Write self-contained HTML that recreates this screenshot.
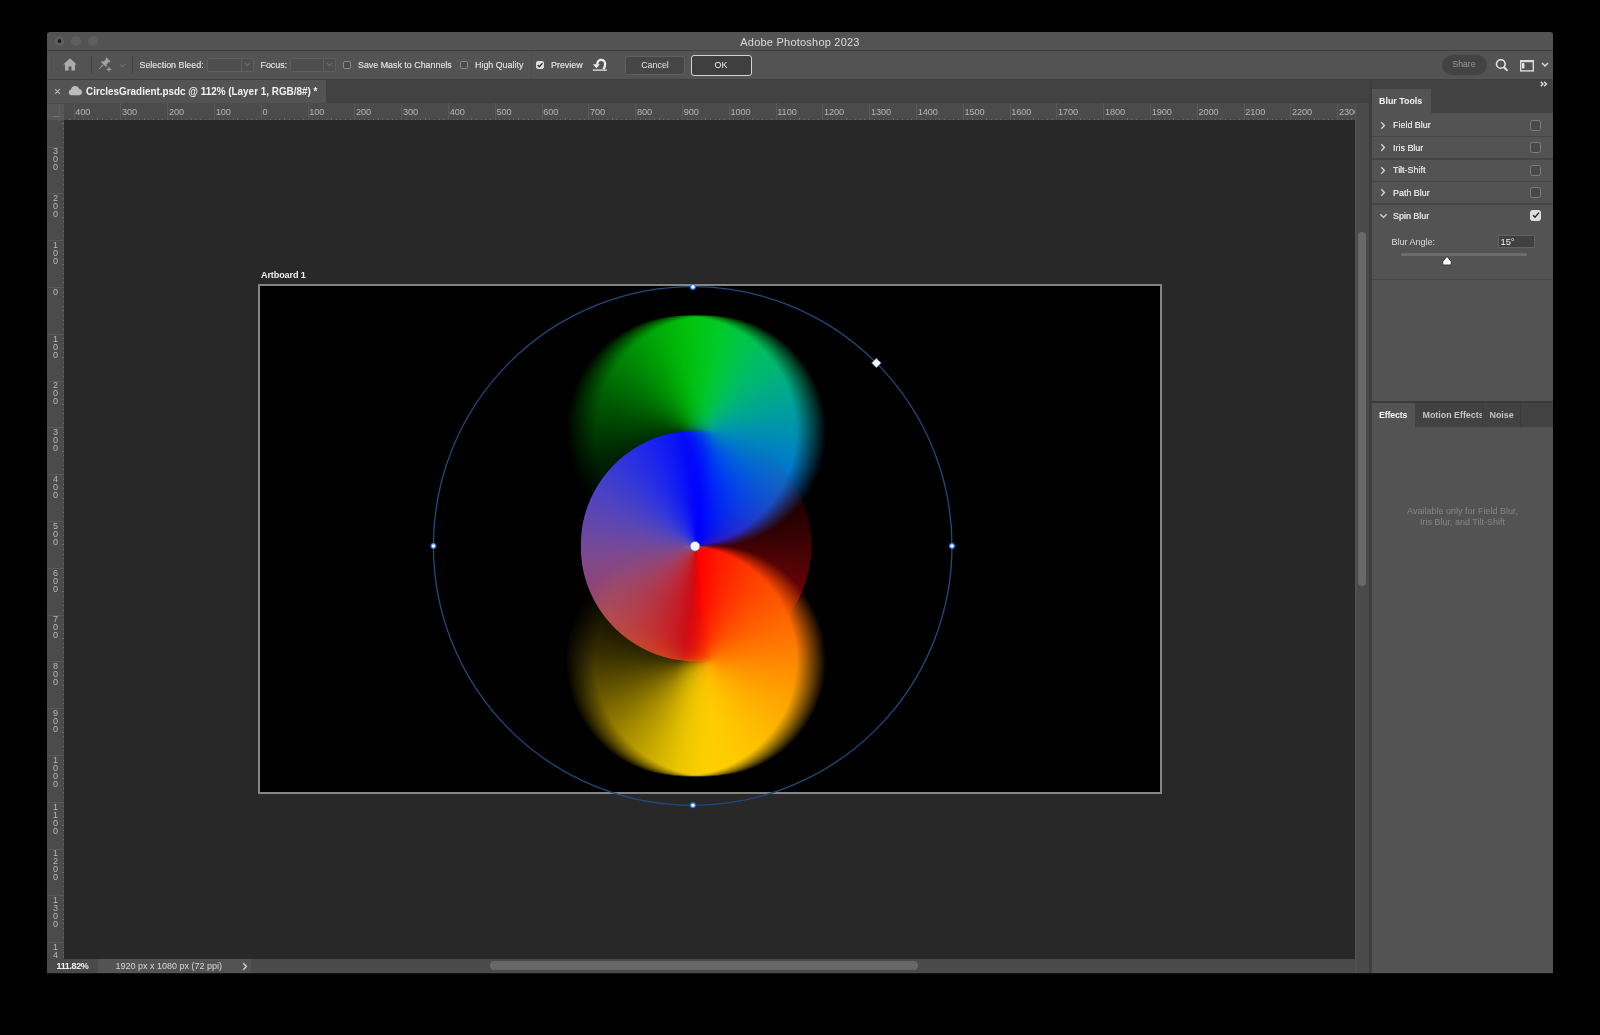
<!DOCTYPE html>
<html><head><meta charset="utf-8"><title>Adobe Photoshop 2023</title>
<style>
*{box-sizing:border-box;margin:0;padding:0}
html,body{width:1600px;height:1035px;background:#000;overflow:hidden}
body{font-family:"Liberation Sans",sans-serif;font-size:9px;color:#d6d6d6;position:relative}
#win{position:absolute;left:0;top:0;width:1600px;height:1035px;clip-path:inset(32px 47px 61.8px 47px round 3.5px 3.5px 0 0);background:#535353}
.abs,#win div,#win span,#win b,#win u,#win svg{position:absolute}
.t{white-space:nowrap;line-height:12px;height:12px}
.t,.btn,#hr,#vr{filter:grayscale(1)}
.o{text-shadow:0 0 0.35px #d6d6d6}
/* title bar */
#title{left:47px;top:32px;width:1506px;height:18px;background:#535353}
#title .t{left:0;width:1506px;text-align:center;top:4px;font-size:11px;color:#dcdcdc;letter-spacing:0.22px}
.tl{width:9.6px;height:9.6px;border-radius:50%;background:#5e5e5e;top:4.1px}
#l1{left:7.5px}#l2{left:24.3px}#l3{left:41.2px}
#l1:after{content:"";position:absolute;left:3.1px;top:3.1px;width:3.4px;height:3.4px;border-radius:50%;background:#161616}
.hline{height:1px;background:#3e3e3e;left:47px;width:1506px}
/* options bar */
#opt{left:47px;top:51px;width:1506px;height:28px;background:#535353}
.vsep{width:1px;background:#444;top:56px;height:18px}
.dd{top:57.5px;height:14px;border:1px solid #5f5f5f;border-radius:2px;background:#4e4e4e}
.dd:after{content:"";position:absolute;right:11px;top:0;width:1px;height:12px;background:#5f5f5f}
.cb{width:8px;height:8px;border:1px solid #8a8a8a;border-radius:2px;background:#4a4a4a;top:61px}
.cb.on{background:#dcdcdc;border-color:#dcdcdc}
.btn{border-radius:3px;text-align:center;color:#e6e6e6;font-size:8.9px}
/* tab bar */
#tabs{left:47px;top:80px;width:1322px;height:23px;background:#424242}
#tab1{left:47px;top:80px;width:279px;height:23px;background:#535353}
/* rulers */
#hr{left:47px;top:103px;width:1308px;height:17px;background:#4b4b4b;overflow:hidden}
#hr b{top:0;width:1px;height:17px;background:#595959;margin-left:-47px}
#hr span{top:4px;font-size:9.2px;line-height:10px;color:#b6b6b6;margin-left:-47px;letter-spacing:-0.1px}
#hr u{width:1px;background:#6e6e6e;margin-left:-47px}
#hr u.m1{top:15.5px;height:1.5px}#hr u.m5{top:14.5px;height:2.5px}
#vr{left:47px;top:120px;width:17px;height:838.8px;background:#4b4b4b;overflow:hidden}
#vr b{left:0;height:1px;width:17px;background:#595959;margin-top:-120px}
#vr span{left:0;width:17px;text-align:center;font-size:9px;line-height:8px;height:8px;color:#b9b9b9;margin-top:-120px}
#vr u{height:1px;background:#6e6e6e;margin-top:-120px}
#vr u.m1{left:15.5px;width:1.5px}#vr u.m5{left:14.5px;width:2.5px}
#corner{left:47px;top:103.5px;width:17px;height:16.5px;background:#565656}
/* canvas */
#canvas{left:64px;top:120px;width:1291px;height:838.8px;background:#282828;overflow:hidden}
#ab{left:258px;top:284px;width:904px;height:510px;border:2px solid #858585;background:#000}
/* scrollbars / status */
#vs{left:1355px;top:103px;width:14px;height:870px;background:linear-gradient(90deg,#505050 0,#505050 1.8px,#4a4a4a 2.2px)}
#status{left:47px;top:958.8px;width:1308px;height:14.5px;background:#4a4a4a}
/* panel */
#psep{left:1369px;top:80px;width:3.2px;height:893px;background:#3e3e3e}
#panel{left:1372px;top:80px;width:181px;height:893px;background:#535353}
.prow{left:1372px;width:181px;height:22px}
.pline{left:1372px;width:181px;height:1.5px;background:#454545;margin-top:-0.25px}
.pcb{left:1530px;width:11px;height:11px;border:1px solid #7e7e7e;border-radius:2.5px;background:#494949}
.pcb.on{background:#dedede;border-color:#dedede}
.ptxt{left:1393px;font-size:8.95px;color:#e2e2e2;text-shadow:0 0 0.35px #e2e2e2}

#art{position:absolute;left:455.8px;top:305.8px;width:480px;height:480px;}
#art .n{position:absolute;left:0;top:0;width:480px;height:480px}
#art .g{position:absolute;left:0;top:0;width:480px;height:480px;border-radius:50%;background:#000;overflow:hidden;isolation:isolate;transform-origin:50% 50%;}
#art i{position:absolute;display:block;width:231.0px;height:231.0px;clip-path:circle(50%);left:124.5px;}
#art .ct{top:9.0px;background:conic-gradient(from 180deg, rgba(0,208,10,0.000) 0.00deg, rgba(0,208,10,0.007) 18.00deg, rgba(0,208,10,0.032) 36.00deg, rgba(0,208,10,0.085) 54.00deg, rgba(0,208,10,0.180) 72.00deg, rgba(0,208,10,0.315) 90.00deg, rgba(0,208,10,0.425) 104.94deg, rgba(0,208,10,0.540) 120.06deg, rgba(0,208,10,0.655) 135.00deg, rgba(0,208,10,0.775) 149.94deg, rgba(0,208,10,0.885) 165.06deg, rgba(0,208,10,1.000) 180.00deg, rgba(0,204,52,1.000) 195.00deg, rgba(0,197,83,1.000) 210.00deg, rgba(0,187,111,1.000) 225.00deg, rgba(0,176,135,1.000) 240.00deg, rgba(0,162,158,1.000) 255.00deg, rgba(0,147,179,1.000) 270.00deg, rgba(0,130,197,1.000) 285.00deg, rgba(0,111,214,1.000) 300.00deg, rgba(0,90,229,1.000) 315.00deg, rgba(0,67,241,1.000) 330.00deg, rgba(0,40,250,1.000) 345.00deg, rgba(0,0,255,1.000) 360.00deg);}
#art .cm{top:124.5px;background:conic-gradient(from 0deg, rgba(206,8,16,0.000) 0.00deg, rgba(206,8,16,0.008) 18.00deg, rgba(206,8,16,0.037) 36.00deg, rgba(206,8,16,0.095) 54.00deg, rgba(206,8,16,0.195) 72.00deg, rgba(206,8,16,0.330) 90.00deg, rgba(206,8,16,0.440) 104.94deg, rgba(206,8,16,0.550) 120.06deg, rgba(206,8,16,0.665) 135.00deg, rgba(206,8,16,0.780) 149.94deg, rgba(206,8,16,0.890) 165.06deg, rgba(206,8,16,1.000) 180.00deg, rgba(199,29,39,1.000) 195.00deg, rgba(188,45,62,1.000) 210.00deg, rgba(174,58,85,1.000) 225.00deg, rgba(157,67,108,1.000) 240.00deg, rgba(138,72,132,1.000) 255.00deg, rgba(118,74,155,1.000) 270.00deg, rgba(97,72,178,1.000) 285.00deg, rgba(76,67,199,1.000) 300.00deg, rgba(55,57,218,1.000) 315.00deg, rgba(36,44,235,1.000) 330.00deg, rgba(17,26,247,1.000) 345.00deg, rgba(0,0,255,1.000) 360.00deg);}
#art .cb{top:240.0px;background:conic-gradient(from 0deg, rgba(255,0,0,1.000) 0.00deg, rgba(255,32,0,1.000) 15.00deg, rgba(255,57,0,1.000) 30.00deg, rgba(255,79,0,1.000) 45.00deg, rgba(255,99,0,1.000) 60.00deg, rgba(255,119,0,1.000) 75.00deg, rgba(255,139,0,1.000) 90.00deg, rgba(255,157,0,1.000) 105.00deg, rgba(255,173,0,1.000) 120.00deg, rgba(255,188,0,1.000) 135.00deg, rgba(255,200,0,1.000) 150.00deg, rgba(255,209,0,1.000) 165.00deg, rgba(255,215,0,1.000) 180.00deg, rgba(255,215,0,0.880) 194.94deg, rgba(255,215,0,0.770) 210.06deg, rgba(255,215,0,0.640) 225.00deg, rgba(255,215,0,0.510) 239.94deg, rgba(255,215,0,0.380) 255.06deg, rgba(255,215,0,0.255) 270.00deg, rgba(255,215,0,0.140) 288.00deg, rgba(255,215,0,0.065) 306.00deg, rgba(255,215,0,0.024) 324.00deg, rgba(255,215,0,0.005) 342.00deg, rgba(255,215,0,0.000) 360.00deg);}

#art{filter:blur(0.45px)}
</style></head><body>
<div id="win">
  <!-- title bar -->
  <div id="title"><div class="tl" id="l1"></div><div class="tl" id="l2"></div><div class="tl" id="l3"></div>
    <div class="t">Adobe Photoshop 2023</div></div>
  <div class="hline" style="top:50px"></div>
  <!-- options bar -->
  <div id="opt"></div>
  <svg style="left:50px;top:57px" width="4" height="17" viewBox="0 0 4 17"><g fill="#444"><rect x="1" y="0" width="1" height="1"/><rect x="1" y="2" width="1" height="1"/><rect x="1" y="4" width="1" height="1"/><rect x="1" y="6" width="1" height="1"/><rect x="1" y="8" width="1" height="1"/><rect x="1" y="10" width="1" height="1"/><rect x="1" y="12" width="1" height="1"/><rect x="1" y="14" width="1" height="1"/></g></svg>
  <svg style="left:63px;top:58px" width="14" height="13" viewBox="0 0 14 13"><path d="M7 0.3 L0.2 6.4 H2 V12.6 H5.6 V8.4 H8.4 V12.6 H12 V6.4 H13.8 Z" fill="#ababab"/></svg>
  <div class="vsep" style="left:91px"></div>
  <svg style="left:97.8px;top:55.8px" width="16" height="16" viewBox="0 0 16 16"><g fill="#a2a2a2"><path d="M8.2 1.2 L12.6 5.6 L11.6 6.3 L10.9 5.9 L8.6 8.3 L8.8 10.3 L7.9 11 L3.0 6.1 L3.8 5.3 L5.8 5.5 L8.1 3.1 L7.6 2.2 Z"/><path d="M5.0 8.6 L5.6 9.2 L1.2 13.2 L0.8 12.8 Z"/><path d="M10.4 11.2 H11.6 V12.8 H13.2 V14 H11.6 V15.6 H10.4 V14 H8.8 V12.8 H10.4 Z"/></g></svg>
  <svg style="left:119px;top:63px" width="7" height="5" viewBox="0 0 7 5"><path d="M0.7 0.8 L3.5 3.6 L6.3 0.8" fill="none" stroke="#6c6c6c" stroke-width="1.1"/></svg>
  <div class="vsep" style="left:132px"></div>
  <div class="t o" style="left:139.5px;top:59px;color:#d6d6d6;font-size:8.9px">Selection Bleed:</div>
  <div class="dd" style="left:207px;width:47px"></div>
  <svg style="left:244px;top:62px" width="7" height="5" viewBox="0 0 7 5"><path d="M0.7 0.8 L3.5 3.6 L6.3 0.8" fill="none" stroke="#6c6c6c" stroke-width="1.1"/></svg>
  <div class="t o" style="left:260.5px;top:59px;color:#d6d6d6;font-size:8.9px">Focus:</div>
  <div class="dd" style="left:289.5px;width:46px"></div>
  <svg style="left:326px;top:62px" width="7" height="5" viewBox="0 0 7 5"><path d="M0.7 0.8 L3.5 3.6 L6.3 0.8" fill="none" stroke="#6c6c6c" stroke-width="1.1"/></svg>
  <div class="cb" style="left:343px"></div>
  <div class="t o" style="left:358px;top:59px;font-size:8.9px">Save Mask to Channels</div>
  <div class="cb" style="left:460px"></div>
  <div class="t o" style="left:475px;top:59px;font-size:8.9px">High Quality</div>
  <div class="vsep" style="left:531px;top:51px;height:28px;background:#4d4d4d"></div>
  <div class="cb on" style="left:536px"></div>
  <svg style="left:536px;top:61px" width="8" height="8" viewBox="0 0 8 8"><path d="M1.6 4.1 L3.3 5.8 L6.5 2.1" fill="none" stroke="#2a2a2a" stroke-width="1.3"/></svg>
  <div class="t o" style="left:551px;top:59px;font-size:8.9px">Preview</div>
  <svg style="left:592px;top:58px" width="16" height="14" viewBox="0 0 16 14"><path d="M11.4 11.2 Q13.4 8.8 13.1 5.7 A3.9 3.9 0 0 0 5.3 5.7 V6.5" fill="none" stroke="#ececec" stroke-width="2.3"/><path d="M0.9 6.3 H7.9 L4.4 10.3 Z" fill="#ececec"/><rect x="0.9" y="11.3" width="14" height="1.7" fill="#c2c2c2"/></svg>
  <div class="btn" style="left:625px;top:55.5px;width:60px;height:19px;background:#464646;border:1px solid #5f5f5f;line-height:17px">Cancel</div>
  <div class="btn" style="left:690.5px;top:54.5px;width:61px;height:21px;background:#3f3f3f;border:1.5px solid #d2d2d2;line-height:18px;color:#f0f0f0">OK</div>
  <div class="btn" style="left:1441.5px;top:55px;width:45px;height:19.5px;border-radius:10px;background:#434343;color:#828282;line-height:19px;font-size:8.6px;text-shadow:0 0 0.4px #828282">Share</div>
  <svg style="left:1494px;top:57px" width="16" height="16" viewBox="0 0 16 16"><circle cx="6.8" cy="7" r="4.3" fill="none" stroke="#e4e4e4" stroke-width="1.6"/><path d="M10 10.2 L12.9 13.1" stroke="#e4e4e4" stroke-width="2" stroke-linecap="round"/></svg>
  <svg style="left:1520px;top:59.5px" width="14" height="12" viewBox="0 0 14 12"><rect x="0.7" y="0.7" width="12.6" height="10.2" fill="none" stroke="#dcdcdc" stroke-width="1.4"/><rect x="0.7" y="0.7" width="12.6" height="1.5" fill="#dcdcdc"/><rect x="2.0" y="3.1" width="2.4" height="5.2" fill="#e8e8e8"/></svg>
  <svg style="left:1541px;top:62.2px" width="8" height="6" viewBox="0 0 8 6"><path d="M1 1 L4 4 L7 1" fill="none" stroke="#dadada" stroke-width="1.5"/></svg>
  <div class="hline" style="top:79px"></div>
  <!-- tab bar -->
  <div id="tabs"></div>
  <div id="tab1"></div>
  <svg style="left:53.5px;top:87.5px" width="7" height="7" viewBox="0 0 7 7"><path d="M1.1 1.1 L5.9 5.9 M5.9 1.1 L1.1 5.9" stroke="#b4b4b4" stroke-width="1.1" fill="none"/></svg>
  <svg style="left:67.7px;top:85.2px" width="15" height="11" viewBox="0 0 15 11"><path d="M3.2 10.3 A2.9 2.9 0 0 1 3.0 4.6 A4.4 4.4 0 0 1 11.4 3.9 A3.3 3.3 0 0 1 11.7 10.3 Z" fill="#bcbcbc"/></svg>
  <div class="t" style="left:86px;top:84.7px;font-size:11px;font-weight:bold;color:#f2f2f2;transform:scaleX(0.9);transform-origin:0 0">CirclesGradient.psdc @ 112% (Layer 1, RGB/8#) *</div>
  <div class="hline" style="top:102.7px;width:1323px;background:#444"></div>
  <!-- rulers -->
  <div id="hr"><b style="left:73.5px"></b><span style="left:75.3px">400</span><b style="left:120.3px"></b><span style="left:122.1px">300</span><b style="left:167.1px"></b><span style="left:168.9px">200</span><b style="left:213.9px"></b><span style="left:215.7px">100</span><b style="left:260.7px"></b><span style="left:262.5px">0</span><b style="left:307.5px"></b><span style="left:309.3px">100</span><b style="left:354.3px"></b><span style="left:356.1px">200</span><b style="left:401.1px"></b><span style="left:402.9px">300</span><b style="left:447.9px"></b><span style="left:449.7px">400</span><b style="left:494.7px"></b><span style="left:496.5px">500</span><b style="left:541.5px"></b><span style="left:543.3px">600</span><b style="left:588.3px"></b><span style="left:590.1px">700</span><b style="left:635.1px"></b><span style="left:636.9px">800</span><b style="left:681.9px"></b><span style="left:683.7px">900</span><b style="left:728.7px"></b><span style="left:730.5px">1000</span><b style="left:775.5px"></b><span style="left:777.3px">1100</span><b style="left:822.3px"></b><span style="left:824.1px">1200</span><b style="left:869.1px"></b><span style="left:870.9px">1300</span><b style="left:915.9px"></b><span style="left:917.7px">1400</span><b style="left:962.7px"></b><span style="left:964.5px">1500</span><b style="left:1009.5px"></b><span style="left:1011.3px">1600</span><b style="left:1056.3px"></b><span style="left:1058.1px">1700</span><b style="left:1103.1px"></b><span style="left:1104.9px">1800</span><b style="left:1149.9px"></b><span style="left:1151.7px">1900</span><b style="left:1196.7px"></b><span style="left:1198.5px">2000</span><b style="left:1243.5px"></b><span style="left:1245.3px">2100</span><b style="left:1290.3px"></b><span style="left:1292.1px">2200</span><b style="left:1337.1px"></b><span style="left:1338.9px">2300</span><u class="m1" style="left:68.8px"></u><u class="m1" style="left:78.2px"></u><u class="m1" style="left:82.9px"></u><u class="m1" style="left:87.5px"></u><u class="m1" style="left:92.2px"></u><u class="m5" style="left:96.9px"></u><u class="m1" style="left:101.6px"></u><u class="m1" style="left:106.3px"></u><u class="m1" style="left:110.9px"></u><u class="m1" style="left:115.6px"></u><u class="m1" style="left:125.0px"></u><u class="m1" style="left:129.7px"></u><u class="m1" style="left:134.3px"></u><u class="m1" style="left:139.0px"></u><u class="m5" style="left:143.7px"></u><u class="m1" style="left:148.4px"></u><u class="m1" style="left:153.1px"></u><u class="m1" style="left:157.7px"></u><u class="m1" style="left:162.4px"></u><u class="m1" style="left:171.8px"></u><u class="m1" style="left:176.5px"></u><u class="m1" style="left:181.1px"></u><u class="m1" style="left:185.8px"></u><u class="m5" style="left:190.5px"></u><u class="m1" style="left:195.2px"></u><u class="m1" style="left:199.9px"></u><u class="m1" style="left:204.5px"></u><u class="m1" style="left:209.2px"></u><u class="m1" style="left:218.6px"></u><u class="m1" style="left:223.3px"></u><u class="m1" style="left:227.9px"></u><u class="m1" style="left:232.6px"></u><u class="m5" style="left:237.3px"></u><u class="m1" style="left:242.0px"></u><u class="m1" style="left:246.7px"></u><u class="m1" style="left:251.3px"></u><u class="m1" style="left:256.0px"></u><u class="m1" style="left:265.4px"></u><u class="m1" style="left:270.1px"></u><u class="m1" style="left:274.7px"></u><u class="m1" style="left:279.4px"></u><u class="m5" style="left:284.1px"></u><u class="m1" style="left:288.8px"></u><u class="m1" style="left:293.5px"></u><u class="m1" style="left:298.1px"></u><u class="m1" style="left:302.8px"></u><u class="m1" style="left:312.2px"></u><u class="m1" style="left:316.9px"></u><u class="m1" style="left:321.5px"></u><u class="m1" style="left:326.2px"></u><u class="m5" style="left:330.9px"></u><u class="m1" style="left:335.6px"></u><u class="m1" style="left:340.3px"></u><u class="m1" style="left:344.9px"></u><u class="m1" style="left:349.6px"></u><u class="m1" style="left:359.0px"></u><u class="m1" style="left:363.7px"></u><u class="m1" style="left:368.3px"></u><u class="m1" style="left:373.0px"></u><u class="m5" style="left:377.7px"></u><u class="m1" style="left:382.4px"></u><u class="m1" style="left:387.1px"></u><u class="m1" style="left:391.7px"></u><u class="m1" style="left:396.4px"></u><u class="m1" style="left:405.8px"></u><u class="m1" style="left:410.5px"></u><u class="m1" style="left:415.1px"></u><u class="m1" style="left:419.8px"></u><u class="m5" style="left:424.5px"></u><u class="m1" style="left:429.2px"></u><u class="m1" style="left:433.9px"></u><u class="m1" style="left:438.5px"></u><u class="m1" style="left:443.2px"></u><u class="m1" style="left:452.6px"></u><u class="m1" style="left:457.3px"></u><u class="m1" style="left:461.9px"></u><u class="m1" style="left:466.6px"></u><u class="m5" style="left:471.3px"></u><u class="m1" style="left:476.0px"></u><u class="m1" style="left:480.7px"></u><u class="m1" style="left:485.3px"></u><u class="m1" style="left:490.0px"></u><u class="m1" style="left:499.4px"></u><u class="m1" style="left:504.1px"></u><u class="m1" style="left:508.7px"></u><u class="m1" style="left:513.4px"></u><u class="m5" style="left:518.1px"></u><u class="m1" style="left:522.8px"></u><u class="m1" style="left:527.5px"></u><u class="m1" style="left:532.1px"></u><u class="m1" style="left:536.8px"></u><u class="m1" style="left:546.2px"></u><u class="m1" style="left:550.9px"></u><u class="m1" style="left:555.5px"></u><u class="m1" style="left:560.2px"></u><u class="m5" style="left:564.9px"></u><u class="m1" style="left:569.6px"></u><u class="m1" style="left:574.3px"></u><u class="m1" style="left:578.9px"></u><u class="m1" style="left:583.6px"></u><u class="m1" style="left:593.0px"></u><u class="m1" style="left:597.7px"></u><u class="m1" style="left:602.3px"></u><u class="m1" style="left:607.0px"></u><u class="m5" style="left:611.7px"></u><u class="m1" style="left:616.4px"></u><u class="m1" style="left:621.1px"></u><u class="m1" style="left:625.7px"></u><u class="m1" style="left:630.4px"></u><u class="m1" style="left:639.8px"></u><u class="m1" style="left:644.5px"></u><u class="m1" style="left:649.1px"></u><u class="m1" style="left:653.8px"></u><u class="m5" style="left:658.5px"></u><u class="m1" style="left:663.2px"></u><u class="m1" style="left:667.9px"></u><u class="m1" style="left:672.5px"></u><u class="m1" style="left:677.2px"></u><u class="m1" style="left:686.6px"></u><u class="m1" style="left:691.3px"></u><u class="m1" style="left:695.9px"></u><u class="m1" style="left:700.6px"></u><u class="m5" style="left:705.3px"></u><u class="m1" style="left:710.0px"></u><u class="m1" style="left:714.7px"></u><u class="m1" style="left:719.3px"></u><u class="m1" style="left:724.0px"></u><u class="m1" style="left:733.4px"></u><u class="m1" style="left:738.1px"></u><u class="m1" style="left:742.7px"></u><u class="m1" style="left:747.4px"></u><u class="m5" style="left:752.1px"></u><u class="m1" style="left:756.8px"></u><u class="m1" style="left:761.5px"></u><u class="m1" style="left:766.1px"></u><u class="m1" style="left:770.8px"></u><u class="m1" style="left:780.2px"></u><u class="m1" style="left:784.9px"></u><u class="m1" style="left:789.5px"></u><u class="m1" style="left:794.2px"></u><u class="m5" style="left:798.9px"></u><u class="m1" style="left:803.6px"></u><u class="m1" style="left:808.3px"></u><u class="m1" style="left:812.9px"></u><u class="m1" style="left:817.6px"></u><u class="m1" style="left:827.0px"></u><u class="m1" style="left:831.7px"></u><u class="m1" style="left:836.3px"></u><u class="m1" style="left:841.0px"></u><u class="m5" style="left:845.7px"></u><u class="m1" style="left:850.4px"></u><u class="m1" style="left:855.1px"></u><u class="m1" style="left:859.7px"></u><u class="m1" style="left:864.4px"></u><u class="m1" style="left:873.8px"></u><u class="m1" style="left:878.5px"></u><u class="m1" style="left:883.1px"></u><u class="m1" style="left:887.8px"></u><u class="m5" style="left:892.5px"></u><u class="m1" style="left:897.2px"></u><u class="m1" style="left:901.9px"></u><u class="m1" style="left:906.5px"></u><u class="m1" style="left:911.2px"></u><u class="m1" style="left:920.6px"></u><u class="m1" style="left:925.3px"></u><u class="m1" style="left:929.9px"></u><u class="m1" style="left:934.6px"></u><u class="m5" style="left:939.3px"></u><u class="m1" style="left:944.0px"></u><u class="m1" style="left:948.7px"></u><u class="m1" style="left:953.3px"></u><u class="m1" style="left:958.0px"></u><u class="m1" style="left:967.4px"></u><u class="m1" style="left:972.1px"></u><u class="m1" style="left:976.7px"></u><u class="m1" style="left:981.4px"></u><u class="m5" style="left:986.1px"></u><u class="m1" style="left:990.8px"></u><u class="m1" style="left:995.5px"></u><u class="m1" style="left:1000.1px"></u><u class="m1" style="left:1004.8px"></u><u class="m1" style="left:1014.2px"></u><u class="m1" style="left:1018.9px"></u><u class="m1" style="left:1023.5px"></u><u class="m1" style="left:1028.2px"></u><u class="m5" style="left:1032.9px"></u><u class="m1" style="left:1037.6px"></u><u class="m1" style="left:1042.3px"></u><u class="m1" style="left:1046.9px"></u><u class="m1" style="left:1051.6px"></u><u class="m1" style="left:1061.0px"></u><u class="m1" style="left:1065.7px"></u><u class="m1" style="left:1070.3px"></u><u class="m1" style="left:1075.0px"></u><u class="m5" style="left:1079.7px"></u><u class="m1" style="left:1084.4px"></u><u class="m1" style="left:1089.1px"></u><u class="m1" style="left:1093.7px"></u><u class="m1" style="left:1098.4px"></u><u class="m1" style="left:1107.8px"></u><u class="m1" style="left:1112.5px"></u><u class="m1" style="left:1117.1px"></u><u class="m1" style="left:1121.8px"></u><u class="m5" style="left:1126.5px"></u><u class="m1" style="left:1131.2px"></u><u class="m1" style="left:1135.9px"></u><u class="m1" style="left:1140.5px"></u><u class="m1" style="left:1145.2px"></u><u class="m1" style="left:1154.6px"></u><u class="m1" style="left:1159.3px"></u><u class="m1" style="left:1163.9px"></u><u class="m1" style="left:1168.6px"></u><u class="m5" style="left:1173.3px"></u><u class="m1" style="left:1178.0px"></u><u class="m1" style="left:1182.7px"></u><u class="m1" style="left:1187.3px"></u><u class="m1" style="left:1192.0px"></u><u class="m1" style="left:1201.4px"></u><u class="m1" style="left:1206.1px"></u><u class="m1" style="left:1210.7px"></u><u class="m1" style="left:1215.4px"></u><u class="m5" style="left:1220.1px"></u><u class="m1" style="left:1224.8px"></u><u class="m1" style="left:1229.5px"></u><u class="m1" style="left:1234.1px"></u><u class="m1" style="left:1238.8px"></u><u class="m1" style="left:1248.2px"></u><u class="m1" style="left:1252.9px"></u><u class="m1" style="left:1257.5px"></u><u class="m1" style="left:1262.2px"></u><u class="m5" style="left:1266.9px"></u><u class="m1" style="left:1271.6px"></u><u class="m1" style="left:1276.3px"></u><u class="m1" style="left:1280.9px"></u><u class="m1" style="left:1285.6px"></u><u class="m1" style="left:1295.0px"></u><u class="m1" style="left:1299.7px"></u><u class="m1" style="left:1304.3px"></u><u class="m1" style="left:1309.0px"></u><u class="m5" style="left:1313.7px"></u><u class="m1" style="left:1318.4px"></u><u class="m1" style="left:1323.1px"></u><u class="m1" style="left:1327.7px"></u><u class="m1" style="left:1332.4px"></u><u class="m1" style="left:1341.8px"></u><u class="m1" style="left:1346.5px"></u><u class="m1" style="left:1351.1px"></u></div>
  <div id="vr"><b style="top:146.5px"></b><span style="top:147.3px">3</span><span style="top:155.3px">0</span><span style="top:163.3px">0</span><b style="top:193.3px"></b><span style="top:194.1px">2</span><span style="top:202.1px">0</span><span style="top:210.1px">0</span><b style="top:240.1px"></b><span style="top:240.9px">1</span><span style="top:248.9px">0</span><span style="top:256.9px">0</span><b style="top:286.9px"></b><span style="top:287.7px">0</span><b style="top:333.7px"></b><span style="top:334.5px">1</span><span style="top:342.5px">0</span><span style="top:350.5px">0</span><b style="top:380.5px"></b><span style="top:381.3px">2</span><span style="top:389.3px">0</span><span style="top:397.3px">0</span><b style="top:427.3px"></b><span style="top:428.1px">3</span><span style="top:436.1px">0</span><span style="top:444.1px">0</span><b style="top:474.1px"></b><span style="top:474.9px">4</span><span style="top:482.9px">0</span><span style="top:490.9px">0</span><b style="top:520.9px"></b><span style="top:521.7px">5</span><span style="top:529.7px">0</span><span style="top:537.7px">0</span><b style="top:567.7px"></b><span style="top:568.5px">6</span><span style="top:576.5px">0</span><span style="top:584.5px">0</span><b style="top:614.5px"></b><span style="top:615.3px">7</span><span style="top:623.3px">0</span><span style="top:631.3px">0</span><b style="top:661.3px"></b><span style="top:662.1px">8</span><span style="top:670.1px">0</span><span style="top:678.1px">0</span><b style="top:708.1px"></b><span style="top:708.9px">9</span><span style="top:716.9px">0</span><span style="top:724.9px">0</span><b style="top:754.9px"></b><span style="top:755.7px">1</span><span style="top:763.7px">0</span><span style="top:771.7px">0</span><span style="top:779.7px">0</span><b style="top:801.7px"></b><span style="top:802.5px">1</span><span style="top:810.5px">1</span><span style="top:818.5px">0</span><span style="top:826.5px">0</span><b style="top:848.5px"></b><span style="top:849.3px">1</span><span style="top:857.3px">2</span><span style="top:865.3px">0</span><span style="top:873.3px">0</span><b style="top:895.3px"></b><span style="top:896.1px">1</span><span style="top:904.1px">3</span><span style="top:912.1px">0</span><span style="top:920.1px">0</span><b style="top:942.1px"></b><span style="top:942.9px">1</span><span style="top:950.9px">4</span><span style="top:958.9px">0</span><span style="top:966.9px">0</span><u class="m5" style="top:123.1px"></u><u class="m1" style="top:127.8px"></u><u class="m1" style="top:132.5px"></u><u class="m1" style="top:137.1px"></u><u class="m1" style="top:141.8px"></u><u class="m1" style="top:151.2px"></u><u class="m1" style="top:155.9px"></u><u class="m1" style="top:160.5px"></u><u class="m1" style="top:165.2px"></u><u class="m5" style="top:169.9px"></u><u class="m1" style="top:174.6px"></u><u class="m1" style="top:179.3px"></u><u class="m1" style="top:183.9px"></u><u class="m1" style="top:188.6px"></u><u class="m1" style="top:198.0px"></u><u class="m1" style="top:202.7px"></u><u class="m1" style="top:207.3px"></u><u class="m1" style="top:212.0px"></u><u class="m5" style="top:216.7px"></u><u class="m1" style="top:221.4px"></u><u class="m1" style="top:226.1px"></u><u class="m1" style="top:230.7px"></u><u class="m1" style="top:235.4px"></u><u class="m1" style="top:244.8px"></u><u class="m1" style="top:249.5px"></u><u class="m1" style="top:254.1px"></u><u class="m1" style="top:258.8px"></u><u class="m5" style="top:263.5px"></u><u class="m1" style="top:268.2px"></u><u class="m1" style="top:272.9px"></u><u class="m1" style="top:277.5px"></u><u class="m1" style="top:282.2px"></u><u class="m1" style="top:291.6px"></u><u class="m1" style="top:296.3px"></u><u class="m1" style="top:300.9px"></u><u class="m1" style="top:305.6px"></u><u class="m5" style="top:310.3px"></u><u class="m1" style="top:315.0px"></u><u class="m1" style="top:319.7px"></u><u class="m1" style="top:324.3px"></u><u class="m1" style="top:329.0px"></u><u class="m1" style="top:338.4px"></u><u class="m1" style="top:343.1px"></u><u class="m1" style="top:347.7px"></u><u class="m1" style="top:352.4px"></u><u class="m5" style="top:357.1px"></u><u class="m1" style="top:361.8px"></u><u class="m1" style="top:366.5px"></u><u class="m1" style="top:371.1px"></u><u class="m1" style="top:375.8px"></u><u class="m1" style="top:385.2px"></u><u class="m1" style="top:389.9px"></u><u class="m1" style="top:394.5px"></u><u class="m1" style="top:399.2px"></u><u class="m5" style="top:403.9px"></u><u class="m1" style="top:408.6px"></u><u class="m1" style="top:413.3px"></u><u class="m1" style="top:417.9px"></u><u class="m1" style="top:422.6px"></u><u class="m1" style="top:432.0px"></u><u class="m1" style="top:436.7px"></u><u class="m1" style="top:441.3px"></u><u class="m1" style="top:446.0px"></u><u class="m5" style="top:450.7px"></u><u class="m1" style="top:455.4px"></u><u class="m1" style="top:460.1px"></u><u class="m1" style="top:464.7px"></u><u class="m1" style="top:469.4px"></u><u class="m1" style="top:478.8px"></u><u class="m1" style="top:483.5px"></u><u class="m1" style="top:488.1px"></u><u class="m1" style="top:492.8px"></u><u class="m5" style="top:497.5px"></u><u class="m1" style="top:502.2px"></u><u class="m1" style="top:506.9px"></u><u class="m1" style="top:511.5px"></u><u class="m1" style="top:516.2px"></u><u class="m1" style="top:525.6px"></u><u class="m1" style="top:530.3px"></u><u class="m1" style="top:534.9px"></u><u class="m1" style="top:539.6px"></u><u class="m5" style="top:544.3px"></u><u class="m1" style="top:549.0px"></u><u class="m1" style="top:553.7px"></u><u class="m1" style="top:558.3px"></u><u class="m1" style="top:563.0px"></u><u class="m1" style="top:572.4px"></u><u class="m1" style="top:577.1px"></u><u class="m1" style="top:581.7px"></u><u class="m1" style="top:586.4px"></u><u class="m5" style="top:591.1px"></u><u class="m1" style="top:595.8px"></u><u class="m1" style="top:600.5px"></u><u class="m1" style="top:605.1px"></u><u class="m1" style="top:609.8px"></u><u class="m1" style="top:619.2px"></u><u class="m1" style="top:623.9px"></u><u class="m1" style="top:628.5px"></u><u class="m1" style="top:633.2px"></u><u class="m5" style="top:637.9px"></u><u class="m1" style="top:642.6px"></u><u class="m1" style="top:647.3px"></u><u class="m1" style="top:651.9px"></u><u class="m1" style="top:656.6px"></u><u class="m1" style="top:666.0px"></u><u class="m1" style="top:670.7px"></u><u class="m1" style="top:675.3px"></u><u class="m1" style="top:680.0px"></u><u class="m5" style="top:684.7px"></u><u class="m1" style="top:689.4px"></u><u class="m1" style="top:694.1px"></u><u class="m1" style="top:698.7px"></u><u class="m1" style="top:703.4px"></u><u class="m1" style="top:712.8px"></u><u class="m1" style="top:717.5px"></u><u class="m1" style="top:722.1px"></u><u class="m1" style="top:726.8px"></u><u class="m5" style="top:731.5px"></u><u class="m1" style="top:736.2px"></u><u class="m1" style="top:740.9px"></u><u class="m1" style="top:745.5px"></u><u class="m1" style="top:750.2px"></u><u class="m1" style="top:759.6px"></u><u class="m1" style="top:764.3px"></u><u class="m1" style="top:768.9px"></u><u class="m1" style="top:773.6px"></u><u class="m5" style="top:778.3px"></u><u class="m1" style="top:783.0px"></u><u class="m1" style="top:787.7px"></u><u class="m1" style="top:792.3px"></u><u class="m1" style="top:797.0px"></u><u class="m1" style="top:806.4px"></u><u class="m1" style="top:811.1px"></u><u class="m1" style="top:815.7px"></u><u class="m1" style="top:820.4px"></u><u class="m5" style="top:825.1px"></u><u class="m1" style="top:829.8px"></u><u class="m1" style="top:834.5px"></u><u class="m1" style="top:839.1px"></u><u class="m1" style="top:843.8px"></u><u class="m1" style="top:853.2px"></u><u class="m1" style="top:857.9px"></u><u class="m1" style="top:862.5px"></u><u class="m1" style="top:867.2px"></u><u class="m5" style="top:871.9px"></u><u class="m1" style="top:876.6px"></u><u class="m1" style="top:881.3px"></u><u class="m1" style="top:885.9px"></u><u class="m1" style="top:890.6px"></u><u class="m1" style="top:900.0px"></u><u class="m1" style="top:904.7px"></u><u class="m1" style="top:909.3px"></u><u class="m1" style="top:914.0px"></u><u class="m5" style="top:918.7px"></u><u class="m1" style="top:923.4px"></u><u class="m1" style="top:928.1px"></u><u class="m1" style="top:932.7px"></u><u class="m1" style="top:937.4px"></u><u class="m1" style="top:946.8px"></u><u class="m1" style="top:951.5px"></u><u class="m1" style="top:956.1px"></u></div>
  <div id="corner"><svg style="left:0;top:0" width="17" height="17" viewBox="0 0 17 17"><g stroke="#676767" stroke-width="1" stroke-dasharray="1 1"><path d="M12.5 0 V17"/><path d="M0 12.5 H17"/></g><path d="M6 12.5 H12" stroke="#777" /></svg></div>
  <!-- canvas -->
  <div id="canvas"></div>
  <div class="t" style="left:261px;top:268.5px;font-size:9.1px;font-weight:bold;color:#f0f0f0;letter-spacing:-0.13px">Artboard 1</div>
  <div id="ab"></div>
  <div id="art"><div class="n"><div class="n"><div class="n"><div class="n"><div class="n"><div class="g" style="transform:rotate(-7.266deg)"><i class="ct"></i><i class="cm"></i><i class="cb"></i></div><div class="n" style="opacity:0.5"><div class="g" style="transform:rotate(-6.797deg)"><i class="ct"></i><i class="cm"></i><i class="cb"></i></div></div></div><div class="n" style="opacity:0.5"><div class="n"><div class="g" style="transform:rotate(-6.328deg)"><i class="ct"></i><i class="cm"></i><i class="cb"></i></div><div class="n" style="opacity:0.5"><div class="g" style="transform:rotate(-5.859deg)"><i class="ct"></i><i class="cm"></i><i class="cb"></i></div></div></div></div></div><div class="n" style="opacity:0.5"><div class="n"><div class="n"><div class="g" style="transform:rotate(-5.391deg)"><i class="ct"></i><i class="cm"></i><i class="cb"></i></div><div class="n" style="opacity:0.5"><div class="g" style="transform:rotate(-4.922deg)"><i class="ct"></i><i class="cm"></i><i class="cb"></i></div></div></div><div class="n" style="opacity:0.5"><div class="n"><div class="g" style="transform:rotate(-4.453deg)"><i class="ct"></i><i class="cm"></i><i class="cb"></i></div><div class="n" style="opacity:0.5"><div class="g" style="transform:rotate(-3.984deg)"><i class="ct"></i><i class="cm"></i><i class="cb"></i></div></div></div></div></div></div></div><div class="n" style="opacity:0.5"><div class="n"><div class="n"><div class="n"><div class="g" style="transform:rotate(-3.516deg)"><i class="ct"></i><i class="cm"></i><i class="cb"></i></div><div class="n" style="opacity:0.5"><div class="g" style="transform:rotate(-3.047deg)"><i class="ct"></i><i class="cm"></i><i class="cb"></i></div></div></div><div class="n" style="opacity:0.5"><div class="n"><div class="g" style="transform:rotate(-2.578deg)"><i class="ct"></i><i class="cm"></i><i class="cb"></i></div><div class="n" style="opacity:0.5"><div class="g" style="transform:rotate(-2.109deg)"><i class="ct"></i><i class="cm"></i><i class="cb"></i></div></div></div></div></div><div class="n" style="opacity:0.5"><div class="n"><div class="n"><div class="g" style="transform:rotate(-1.641deg)"><i class="ct"></i><i class="cm"></i><i class="cb"></i></div><div class="n" style="opacity:0.5"><div class="g" style="transform:rotate(-1.172deg)"><i class="ct"></i><i class="cm"></i><i class="cb"></i></div></div></div><div class="n" style="opacity:0.5"><div class="n"><div class="g" style="transform:rotate(-0.703deg)"><i class="ct"></i><i class="cm"></i><i class="cb"></i></div><div class="n" style="opacity:0.5"><div class="g" style="transform:rotate(-0.234deg)"><i class="ct"></i><i class="cm"></i><i class="cb"></i></div></div></div></div></div></div></div></div></div><div class="n" style="opacity:0.5"><div class="n"><div class="n"><div class="n"><div class="n"><div class="g" style="transform:rotate(0.234deg)"><i class="ct"></i><i class="cm"></i><i class="cb"></i></div><div class="n" style="opacity:0.5"><div class="g" style="transform:rotate(0.703deg)"><i class="ct"></i><i class="cm"></i><i class="cb"></i></div></div></div><div class="n" style="opacity:0.5"><div class="n"><div class="g" style="transform:rotate(1.172deg)"><i class="ct"></i><i class="cm"></i><i class="cb"></i></div><div class="n" style="opacity:0.5"><div class="g" style="transform:rotate(1.641deg)"><i class="ct"></i><i class="cm"></i><i class="cb"></i></div></div></div></div></div><div class="n" style="opacity:0.5"><div class="n"><div class="n"><div class="g" style="transform:rotate(2.109deg)"><i class="ct"></i><i class="cm"></i><i class="cb"></i></div><div class="n" style="opacity:0.5"><div class="g" style="transform:rotate(2.578deg)"><i class="ct"></i><i class="cm"></i><i class="cb"></i></div></div></div><div class="n" style="opacity:0.5"><div class="n"><div class="g" style="transform:rotate(3.047deg)"><i class="ct"></i><i class="cm"></i><i class="cb"></i></div><div class="n" style="opacity:0.5"><div class="g" style="transform:rotate(3.516deg)"><i class="ct"></i><i class="cm"></i><i class="cb"></i></div></div></div></div></div></div></div><div class="n" style="opacity:0.5"><div class="n"><div class="n"><div class="n"><div class="g" style="transform:rotate(3.984deg)"><i class="ct"></i><i class="cm"></i><i class="cb"></i></div><div class="n" style="opacity:0.5"><div class="g" style="transform:rotate(4.453deg)"><i class="ct"></i><i class="cm"></i><i class="cb"></i></div></div></div><div class="n" style="opacity:0.5"><div class="n"><div class="g" style="transform:rotate(4.922deg)"><i class="ct"></i><i class="cm"></i><i class="cb"></i></div><div class="n" style="opacity:0.5"><div class="g" style="transform:rotate(5.391deg)"><i class="ct"></i><i class="cm"></i><i class="cb"></i></div></div></div></div></div><div class="n" style="opacity:0.5"><div class="n"><div class="n"><div class="g" style="transform:rotate(5.859deg)"><i class="ct"></i><i class="cm"></i><i class="cb"></i></div><div class="n" style="opacity:0.5"><div class="g" style="transform:rotate(6.328deg)"><i class="ct"></i><i class="cm"></i><i class="cb"></i></div></div></div><div class="n" style="opacity:0.5"><div class="n"><div class="g" style="transform:rotate(6.797deg)"><i class="ct"></i><i class="cm"></i><i class="cb"></i></div><div class="n" style="opacity:0.5"><div class="g" style="transform:rotate(7.266deg)"><i class="ct"></i><i class="cm"></i><i class="cb"></i></div></div></div></div></div></div></div></div></div></div></div></div>
  <svg style="left:420px;top:270px" width="560" height="550" viewBox="420 270 560 550">
    <circle cx="692.7" cy="546" r="259.3" fill="none" stroke="#214a7e" stroke-width="1.3"/>
    <g fill="#fff" stroke="#1e78e6" stroke-width="1.2">
      <circle cx="692.9" cy="286.9" r="2.4"/><circle cx="692.9" cy="805.3" r="2.4"/>
      <circle cx="433.4" cy="546" r="2.4"/><circle cx="952" cy="546" r="2.4"/>
      <rect x="873" y="359.6" width="6.8" height="6.8" transform="rotate(45 876.4 363)" fill="#f6f6f6" stroke="#2b62c8" stroke-width="0.5"/>
    </g>
    <circle cx="695" cy="546.3" r="4.9" fill="#f6f6f6" stroke="#2a66d8" stroke-width="0.8"/>
  </svg>
  <!-- scrollbars -->
  <div id="vs"></div>
  <div style="left:1357.9px;top:232px;width:8.4px;height:354px;border-radius:4.3px;background:#696969"></div>
  <div id="status"></div>
  <div style="left:98px;top:958.8px;width:153px;height:14.5px;background:#535353"></div>
  <div class="t" style="left:56.5px;top:960px;font-size:9px;font-weight:bold;color:#f0f0f0;letter-spacing:-0.37px">111.82%</div>
  <div class="t" style="left:115.5px;top:960px;font-size:9px;color:#d8d8d8">1920 px x 1080 px (72 ppi)</div>
  <svg style="left:242px;top:961.5px" width="6" height="9" viewBox="0 0 6 9"><path d="M1.3 1.3 L4.4 4.5 L1.3 7.7" fill="none" stroke="#d6d6d6" stroke-width="1.35"/></svg>
  <div style="left:489.5px;top:961.3px;width:428.4px;height:8.4px;border-radius:4.2px;background:#686868"></div>
  <!-- right panel -->
  <div id="psep"></div>
  <div id="panel"></div>
  <div style="left:1372px;top:80px;width:181px;height:9px;background:#434343"></div>
  <svg style="left:1540.3px;top:80.8px" width="8" height="6" viewBox="0 0 8 6"><path d="M0.8 0.8 L3 3 L0.8 5.2 M4.2 0.8 L6.4 3 L4.2 5.2" fill="none" stroke="#e0e0e0" stroke-width="1.35"/></svg>
  <div style="left:1372px;top:89px;width:181px;height:23.5px;background:#424242"></div>
  <div style="left:1372px;top:89px;width:59px;height:23.5px;background:#535353"></div>
  <div class="t" style="left:1379px;top:94.5px;font-size:8.9px;font-weight:bold;color:#f4f4f4">Blur Tools</div>
  <!--PROWS-->
  <div class="ptxt t" style="top:119px">Field Blur</div><div class="pcb" style="top:119.5px"></div><div class="pline" style="top:136px"></div>
  <div class="ptxt t" style="top:141.5px">Iris Blur</div><div class="pcb" style="top:142px"></div><div class="pline" style="top:158.5px"></div>
  <div class="ptxt t" style="top:164px">Tilt-Shift</div><div class="pcb" style="top:164.5px"></div><div class="pline" style="top:181px"></div>
  <div class="ptxt t" style="top:186.5px">Path Blur</div><div class="pcb" style="top:187px"></div><div class="pline" style="top:203.5px"></div>
  <div class="ptxt t" style="top:209.5px">Spin Blur</div><div class="pcb on" style="top:209.5px"></div>
  <svg style="left:1531.5px;top:211px" width="8" height="8" viewBox="0 0 8 8"><path d="M1 4.2 L3 6.2 L7 1.6" fill="none" stroke="#222" stroke-width="1.4"/></svg>
  <svg style="left:1380px;top:120.5px" width="6" height="9" viewBox="0 0 6 9"><path d="M1.3 1.3 L4.4 4.5 L1.3 7.7" fill="none" stroke="#d6d6d6" stroke-width="1.35"/></svg>
  <svg style="left:1380px;top:143px" width="6" height="9" viewBox="0 0 6 9"><path d="M1.3 1.3 L4.4 4.5 L1.3 7.7" fill="none" stroke="#d6d6d6" stroke-width="1.35"/></svg>
  <svg style="left:1380px;top:165.5px" width="6" height="9" viewBox="0 0 6 9"><path d="M1.3 1.3 L4.4 4.5 L1.3 7.7" fill="none" stroke="#d6d6d6" stroke-width="1.35"/></svg>
  <svg style="left:1380px;top:188px" width="6" height="9" viewBox="0 0 6 9"><path d="M1.3 1.3 L4.4 4.5 L1.3 7.7" fill="none" stroke="#d6d6d6" stroke-width="1.35"/></svg>
  <svg style="left:1379px;top:212.5px" width="9" height="6" viewBox="0 0 9 6"><path d="M1.3 1.3 L4.5 4.4 L7.7 1.3" fill="none" stroke="#d6d6d6" stroke-width="1.35"/></svg>
  <div class="t" style="left:1391.5px;top:235.5px;font-size:9px;color:#dedede">Blur Angle:</div>
  <div style="left:1498px;top:235px;width:37px;height:12.5px;background:#404040;border:1px solid #626262"></div>
  <div class="t" style="left:1500.5px;top:235.5px;font-size:9.3px;color:#f2f2f2">15°</div>
  <div style="left:1401px;top:253px;width:126px;height:2.5px;background:#6c6c6c;border-radius:1px"></div>
  <svg style="left:1441px;top:255px" width="12" height="12" viewBox="0 0 12 12"><path d="M6 1.4 L10.2 6.6 V9 Q10.2 10 9.2 10 H2.8 Q1.8 10 1.8 9 V6.6 Z" fill="#fff" stroke="#2c2c2c" stroke-width="0.9" stroke-linejoin="round"/></svg>
  <div class="pline" style="top:279px"></div>
  <div style="left:1372px;top:401px;width:181px;height:2px;background:#3a3a3a"></div>
  <div style="left:1372px;top:403px;width:181px;height:23.5px;background:#424242"></div>
  <div style="left:1372px;top:403px;width:43px;height:23.5px;background:#535353"></div>
  <div style="left:1482px;top:403px;width:1px;height:23.5px;background:#3c3c3c"></div>
  <div style="left:1520px;top:403px;width:1px;height:23.5px;background:#3c3c3c"></div>
  <div class="t" style="left:1379px;top:408.5px;font-size:8.9px;letter-spacing:-0.2px;font-weight:bold;color:#f4f4f4">Effects</div>
  <div class="t" style="left:1422.5px;top:408.5px;font-size:8.9px;font-weight:bold;color:#c4c4c4;width:59.5px;overflow:hidden">Motion Effects</div>
  <div class="t" style="left:1489.5px;top:408.5px;font-size:8.9px;font-weight:bold;color:#c4c4c4">Noise</div>
  <div class="t" style="left:1372px;width:181px;text-align:center;top:504.5px;font-size:9px;color:#858585">Available only for Field Blur,</div>
  <div class="t" style="left:1372px;width:181px;text-align:center;top:515.5px;font-size:9px;color:#858585">Iris Blur, and Tilt-Shift</div>
</div>
</body></html>
